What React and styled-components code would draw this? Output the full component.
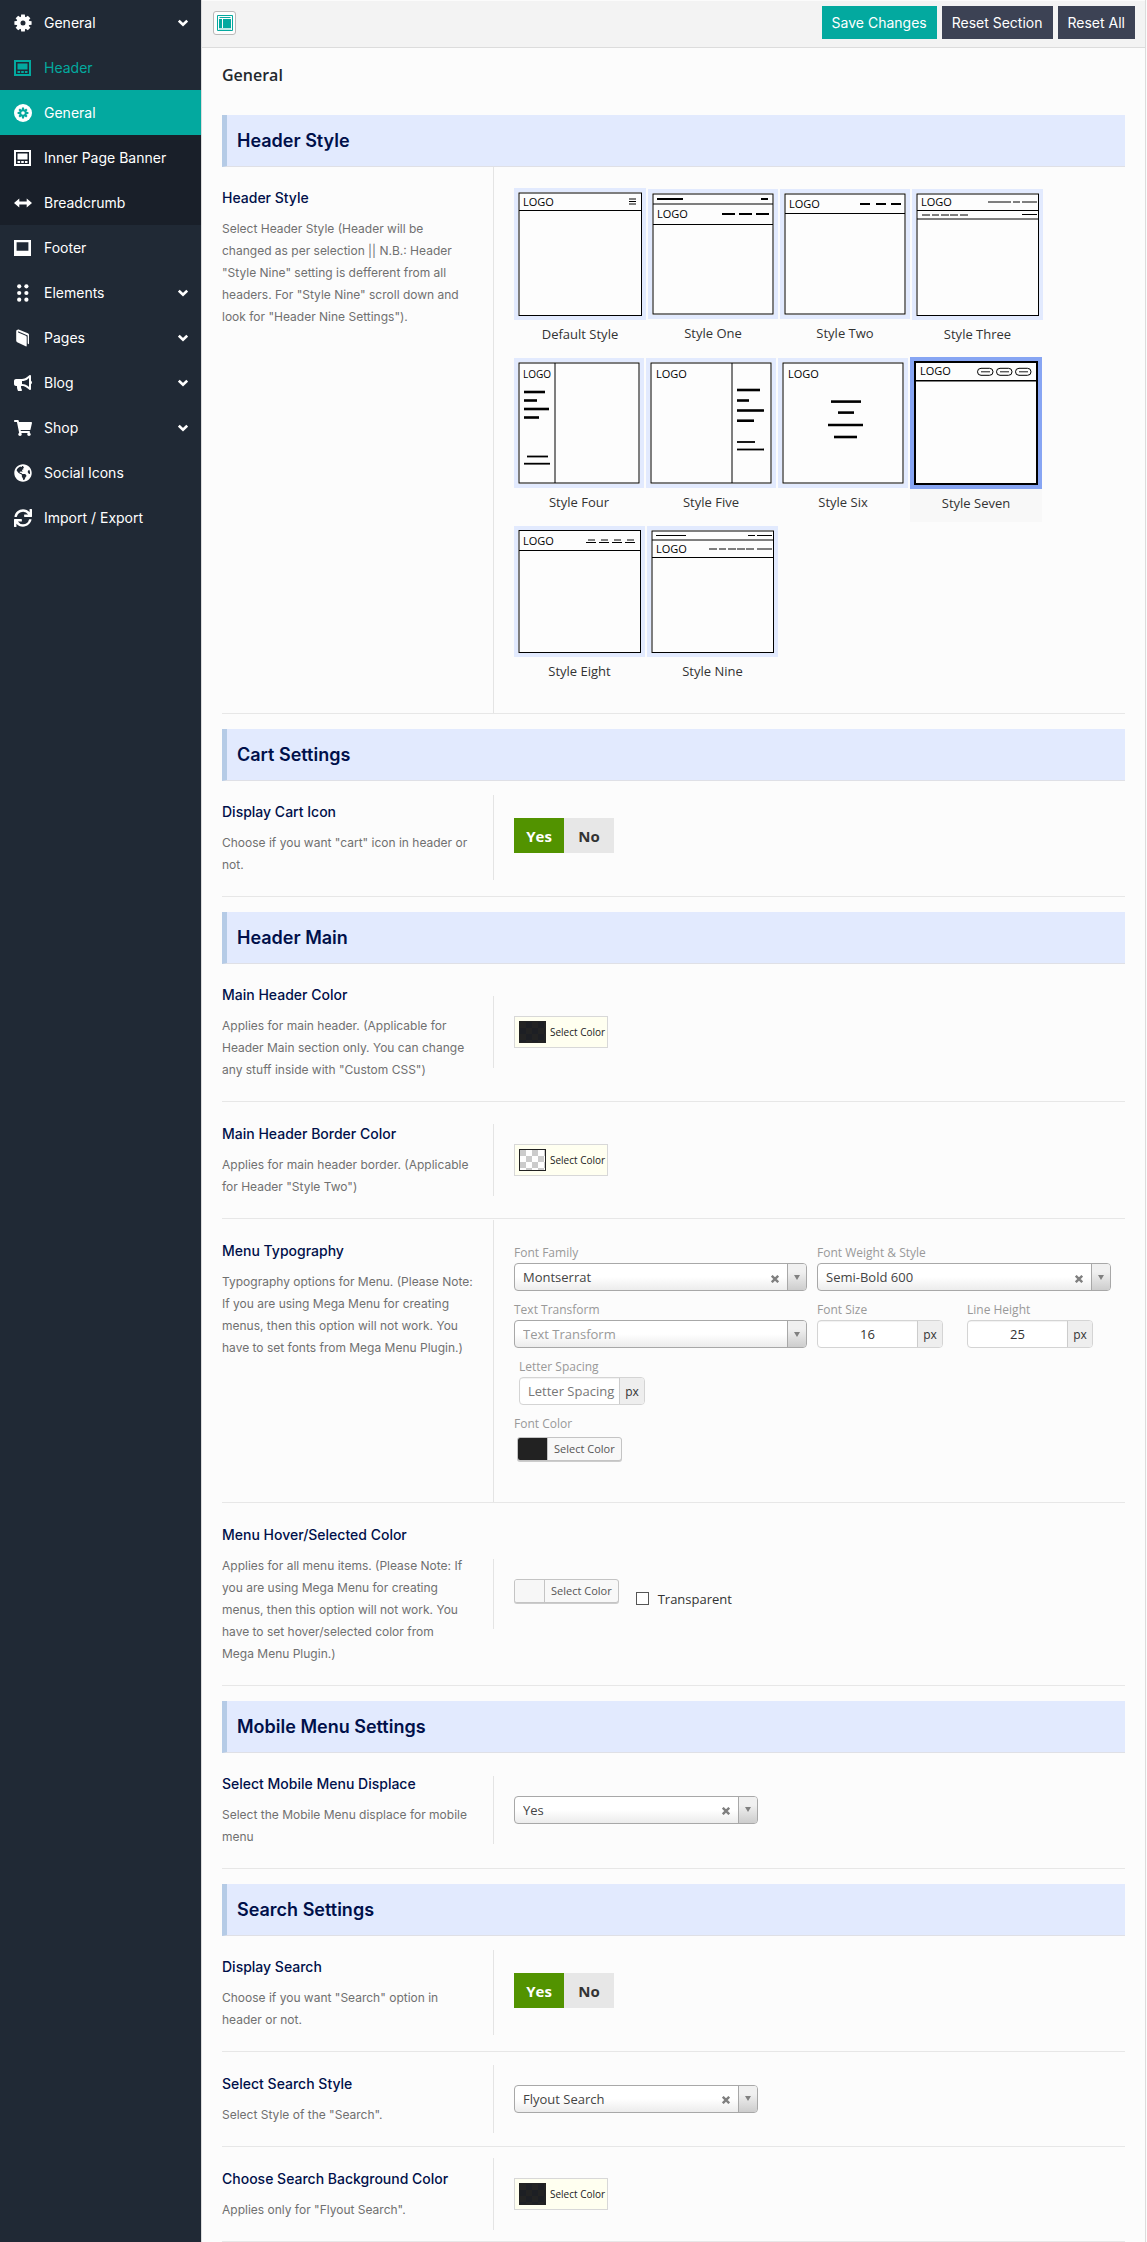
import React from "react";
import styled, { createGlobalStyle, css } from "styled-components";
import { FaBullhorn, FaGlobeAmericas, FaShoppingCart, FaSync } from "react-icons/fa";

const brand = "'Inter', 'Open Sans', sans-serif";
const system = "'Open Sans', 'Noto Sans', sans-serif";

const GlobalStyle = createGlobalStyle`
  *, *::before, *::after { box-sizing: border-box; }
  body { margin: 0; background: #fcfcfc; color: #333; font-family: ${system}; font-size: 13px; }
  h2, h3, h4, p, ul, fieldset { margin: 0; padding: 0; }
  fieldset { border: 0; min-width: 0; }
  button, input, select { font: inherit; color: inherit; margin: 0; }
`;

const hiddenInput = css`
  position: absolute;
  opacity: 0;
  width: 1px;
  height: 1px;
  margin: 0;
`;

/* ---------- shell ---------- */

const Page = styled.div`
  display: flex;
  min-height: 100vh;
  padding-right: 1px;
`;

const Sidebar = styled.nav`
  flex: 0 0 201px;
  background: #202935;
`;

const NavList = styled.ul`
  list-style: none;
`;

const NavLink = styled.a`
  display: flex;
  align-items: center;
  gap: 12px;
  height: 45px;
  padding: 0 13px 0 14px;
  font: 400 14px/20px ${brand};
  text-decoration: none;
  color: ${(p) => (p.$tone === "parent" ? "#03a99f" : "#fff")};
  background: ${(p) => (p.$tone === "active" ? "#03a99f" : p.$tone === "sub" ? "#191f29" : "transparent")};

  svg { flex: none; }
  span { flex: 1; }
`;

const Main = styled.main`
  flex: 1;
  min-width: 0;
  border: solid #dcdcdc;
  border-width: 0 1px;
`;

const TopBar = styled.header`
  display: flex;
  align-items: center;
  gap: 5px;
  padding: 5px 10px 8px 11px;
  border-top: 1px solid #fbfbfb;
  border-bottom: 1px solid #dcdcdc;
  background: #f3f3f3;
`;

const ExpandButton = styled.button`
  display: grid;
  place-items: center;
  width: 23px;
  height: 24px;
  margin-right: auto;
  padding: 0;
  border: 1px solid #b9b9b9;
  border-radius: 3px;
  background: #fdfdfd;
`;

const ActionButton = styled.button`
  height: 33px;
  padding: 0 10px;
  border: 0;
  background: ${(p) => (p.$primary ? "#03a99f" : "#3c4254")};
  color: #fff;
  font: 400 14px/20px ${brand};
`;

const Content = styled.div`
  padding: 0 20px 1px;
`;

const PageTitle = styled.h2`
  padding: 15px 0 28px;
  font: 600 16px/24px ${system};
  color: #23282d;
`;

const Section = styled.section`
  & + & { margin-top: 15px; }
`;

const Band = styled.h3`
  padding: 14px 10px 13px;
  border-left: 5px solid #b5cbe6;
  border-bottom: 1px solid #dfe0e6;
  background: #e2eafe;
  color: #00104a;
  font: 600 18px/24px ${brand};
`;

const Row = styled.div`
  display: grid;
  grid-template-columns: 271px minmax(0, 1fr);
  align-items: center;
  border-bottom: 1px solid #e7e7e7;

  & + & { padding-top: 1px; }
`;

const Info = styled.div`
  align-self: start;
  padding: 20px 4px 20px 0;
`;

const FieldTitle = styled.h4`
  margin-bottom: 9px;
  font: 500 14px/22px ${brand};
  color: #00104a;
`;

const Description = styled.p`
  font: 400 12px/22px ${brand};
  color: #707070;
  white-space: pre-line;
`;

const cellPadding = {
  toggle: "23px 0 27px 20px",
  control: "20px 0 20px 20px",
  tall: "21px 0 23px 20px",
};

const Cell = styled.div`
  align-self: ${(p) => (p.$kind === "tall" ? "stretch" : "center")};
  margin-bottom: ${(p) => (p.$kind === "tall" ? "0" : "2px")};
  padding: ${(p) => cellPadding[p.$kind]};
  border-left: 1px solid #e4e4e4;
`;

/* ---------- header style picker ---------- */

const Gallery = styled.fieldset`
  display: flex;
  flex-wrap: wrap;
  align-items: center;
  gap: 4px 2px;
`;

const StyleOption = styled.label`
  display: flex;
  flex-direction: column;
  font-size: 13px;
  line-height: 28px;
  text-align: center;
  padding-bottom: 5px;
  cursor: pointer;

  input { ${hiddenInput} }
  svg {
    display: block;
    border: 4px solid #e2eafe;
    background: #fdfdfd;
  }
  &:has(input:checked) { background: #f8f8f8; }
  input:checked + svg { border-color: #87a5f3; }
`;

/* ---------- toggles ---------- */

const Toggle = styled.fieldset`
  display: flex;

  label {
    width: 50px;
    height: 35px;
    font: 700 15px/36px ${system};
    text-align: center;
    color: #333;
    background: #e7e7e7;
    cursor: pointer;
  }
  input { ${hiddenInput} }
  label:has(input:checked) { background: #529300; color: #fff; }
`;

/* ---------- colour buttons ---------- */

const AlphaButton = styled.button`
  display: flex;
  align-items: center;
  gap: 4px;
  height: 32px;
  padding: 0 2px 0 4px;
  border: 1px solid #d8d8d8;
  background: #fffff0;
  color: #222;
  font-size: 10px;
  line-height: 20px;
  white-space: nowrap;
`;

const AlphaSwatch = styled.span`
  width: 27px;
  height: 22px;
  border: 1px solid #222;
  background: ${(p) =>
    p.$clear
      ? "repeating-conic-gradient(#fff 0 25%, #ccc 0 50%) 0 0 / 12px 12px"
      : "repeating-conic-gradient(#1d1f24 0 25%, #232323 0 50%) 0 0 / 12px 12px"};
`;

const PickerButton = styled.button`
  display: flex;
  height: 24px;
  padding: 0;
  border: 1px solid #c4c4c4;
  border-radius: 3px;
  background: #f8f8f8;
  box-shadow: 0 1px 0 #ccc;
  color: #555;
  font-size: 11px;
  line-height: 22px;
  overflow: hidden;
  white-space: nowrap;

  &::before {
    content: "";
    align-self: stretch;
    width: 30px;
    border-right: 1px solid #c4c4c4;
    background: ${(p) => p.$color};
  }
  span { padding: 0 6px; }
`;

const ColorLine = styled.div`
  display: flex;
  align-items: flex-start;
  gap: 17px;
`;

const CheckLabel = styled.label`
  display: flex;
  align-items: center;
  gap: 9px;
  padding-top: 10px;
  line-height: 20px;
`;

const Checkbox = styled.input.attrs({ type: "checkbox" })`
  appearance: none;
  width: 13px;
  height: 13px;
  border: 1px solid #555;
  background: #fff;
`;

/* ---------- selects and inputs ---------- */

const SelectBox = styled.div`
  display: flex;
  height: 28px;
  max-width: ${(p) => (p.$narrow ? "244px" : "none")};
  border: 1px solid #a8a8a8;
  border-radius: 4px;
  background: linear-gradient(#fff 50%, #ececec);
  overflow: hidden;

  select {
    flex: 1;
    min-width: 0;
    padding: 0 8px;
    border: 0;
    appearance: none;
    background: transparent;
    color: ${(p) => (p.$empty ? "#999" : "#444")};
  }
`;

const ClearButton = styled.button`
  display: grid;
  place-items: center;
  width: 24px;
  padding: 3px 0 0;
  border: 0;
  background: transparent;
  color: #808080;
`;

const Arrow = styled.span`
  display: grid;
  place-items: center;
  width: 19px;
  border-left: 1px solid #a8a8a8;
  background: linear-gradient(#f0f0f0 30%, #cdcdcd);
  color: #808080;
`;

const smallLabel = css`
  display: block;
  font-size: 12px;
  line-height: 20px;
  color: #999;
`;

const FieldLabel = styled.label`
  ${smallLabel}
`;

const GroupLabel = styled.div`
  ${smallLabel}
`;

const TypeGrid = styled.div`
  display: grid;
  grid-template-columns: 293px 294px;
  gap: 9px 10px;
  padding-top: 2px;
`;

const TypeBottom = styled.div`
  display: grid;
  gap: 9px;
  padding: 9px 0 18px;
`;

const UnitFields = styled.div`
  display: flex;
  gap: 24px;
  padding-left: ${(p) => (p.$indent ? "5px" : "0")};
`;

const UnitInput = styled.div`
  display: flex;
  width: 126px;
  height: 28px;
  border: 1px solid #d4d4d4;
  border-radius: 4px;
  background: #fff;
  overflow: hidden;

  input {
    flex: 1;
    min-width: 0;
    padding: ${(p) => (p.$left ? "0 0 0 8px" : "0 8px")};
    border: 0;
    background: transparent;
    box-shadow: inset 0 1px 1px rgba(0, 0, 0, 0.06);
    color: #333;
    text-align: ${(p) => (p.$left ? "left" : "center")};
  }
  input::placeholder { color: #777; opacity: 1; }
  span {
    width: 25px;
    border-left: 1px solid #ccc;
    background: #eee;
    font-size: 12px;
    line-height: 27px;
    text-align: center;
  }
`;

const ColorSlot = styled.div`
  padding: 3px 3px 0;
`;

/* ---------- icons ---------- */

const Icon = ({ children }) => (
  <svg width="18" height="18" viewBox="0 0 18 18" fill="currentColor" aria-hidden="true">
    {children}
  </svg>
);

const teeth = [0, 45, 90, 135, 180, 225, 270, 315];

const Gear = () => (
  <Icon>
    {teeth.map((a) => (
      <path key={a} d="M7.2 0.4h3.6l0.5 4h-4.6z" transform={`rotate(${a} 9 9)`} />
    ))}
    <circle cx="9" cy="9" r="4.5" fill="none" stroke="currentColor" strokeWidth="4" />
  </Icon>
);

const GearBadge = () => (
  <Icon>
    <circle cx="9" cy="9" r="9" />
    <g fill="#03a99f">
      {teeth.map((a) => (
        <path key={a} d="M8 3.6h2l0.3 2.4h-2.6z" transform={`rotate(${a} 9 9)`} />
      ))}
    </g>
    <circle cx="9" cy="9" r="2.7" fill="none" stroke="#03a99f" strokeWidth="1.8" />
  </Icon>
);

const LayoutIcon = () => (
  <Icon>
    <path fillRule="evenodd" d="M0 1h17v16H0z M2 3v12h13V3z" />
    <path d="M3.5 4.5h10v6h-10z M3.5 12h2.6v2H3.5z M7.2 12h2.6v2H7.2z M10.9 12h2.6v2h-2.6z" />
  </Icon>
);

const ArrowsH = () => (
  <Icon>
    <path d="M0 9l5.3-4.6v3.1h7.4V4.4L18 9l-5.3 4.6v-3.1H5.3v3.1z" />
  </Icon>
);

const FooterIcon = () => (
  <Icon>
    <path fillRule="evenodd" d="M0 1h17v16H0z M2.6 3.2v8.6h11.8V3.2z" />
  </Icon>
);

const Dots = () => (
  <Icon>
    {[2.3, 9, 15.7].map((y) => (
      <g key={y}>
        <circle cx="5.2" cy={y} r="2.1" />
        <circle cx="12.4" cy={y} r="2.1" />
      </g>
    ))}
  </Icon>
);

const Book = () => (
  <Icon>
    <path d="M2.2 2.4C2.2 1 4 .2 5.2.7l8.6 3.5c.7.3 1.2.9 1.2 1.6v9.4l-1.3-.7V6.4L4.6 2.6c-.7-.3-1 .5-.4.8l7.6 3.3c.6.3.9.7.9 1.4v8.6c0 .8-.4 1-1 .6L3.2 13.2c-.7-.4-1-.9-1-1.6z" />
  </Icon>
);

const Chevron = () => (
  <svg width="10" height="8" viewBox="0 0 10 8" fill="none" stroke="currentColor" strokeWidth="2.6" aria-hidden="true">
    <path d="M0.8 1.6L5 5.6l4.2-4" />
  </svg>
);

const Cross = () => (
  <svg width="8" height="8" viewBox="0 0 8 8" stroke="currentColor" strokeWidth="2.4" aria-hidden="true">
    <path d="M0.8 0.8l6.4 6.4M7.2 0.8L0.8 7.2" />
  </svg>
);

const Triangle = () => (
  <svg width="6" height="5" viewBox="0 0 6 5" fill="currentColor" aria-hidden="true">
    <path d="M0 0h6L3 5z" />
  </svg>
);

const ExpandIcon = () => (
  <svg width="16" height="16" viewBox="0 0 16 16" aria-hidden="true">
    <path fill="none" stroke="#03a99f" d="M0.5 0.5h15v15h-15z M2.5 2.5h11" />
    <path fill="#03a99f" d="M2 4h3v9H2z M6 4h8v9H6z" />
    <path stroke="#03a99f" strokeOpacity="0.5" d="M2 14h12" />
  </svg>
);

/* ---------- header style drawings ---------- */

// frame: [x1, y1, x2, y2]; logo: [x, baseline]; lines: [x1, x2, y, thickness].
const headerStyles = [
  {
    name: "Default Style", size: 132, frame: [1, 1, 123.5, 123.5], logo: [5, 13.5], rules: [18.5],
    lines: [[111, 118, 7, 1], [111, 118, 9.5, 1], [111, 118, 12, 1]],
  },
  {
    name: "Style One", size: 130, frame: [1, 1, 121, 121], logo: [5, 25], rules: [11, 31.5],
    lines: [[5, 31, 6, 2], [109, 116, 6, 2], [70, 83, 21, 2], [87, 100, 21, 2], [104, 117, 21, 2]],
  },
  {
    name: "Style Two", size: 130, frame: [1, 1, 121, 121], logo: [5, 15], rules: [20.5],
    lines: [[76, 86, 11, 2], [92, 102, 11, 2], [107, 117, 11, 2]],
  },
  {
    name: "Style Three", size: 131, frame: [1, 1, 122.5, 122.5], logo: [5, 12.5], rules: [17.5, 26],
    lines: [
      [72, 95, 9, 1], [97, 104, 9, 1], [106, 121, 9, 1],
      [6, 14, 22, 1], [16, 23, 22, 1], [25, 33, 22, 1], [34, 42, 22, 1], [44, 52, 22, 1], [106, 121, 21.5, 1],
    ],
  },
  {
    name: "Style Four", size: 130, frame: [1, 1, 121, 121], logo: [5, 16], logoSize: 10, rules: [], column: 37,
    lines: [[6, 27, 30, 2.6], [6, 19, 38.5, 2.6], [6, 31, 47, 2.6], [6, 21, 55.5, 2.6], [9, 30, 94.5, 1.8], [6, 32, 101.7, 1.8]],
  },
  {
    name: "Style Five", size: 130, frame: [1, 1, 121, 121], logo: [6, 16], rules: [], column: 82,
    lines: [[87, 110, 28, 2.6], [87, 99, 38.5, 2.6], [87, 114, 48.5, 2.6], [87, 104, 58.7, 2.6], [87, 105, 80, 1.8], [87, 114, 87.5, 1.8]],
  },
  {
    name: "Style Six", size: 130, frame: [1, 1, 121, 121], logo: [6, 16], rules: [],
    lines: [[49, 79, 39.6, 2.6], [56, 72, 50.6, 2.6], [46, 81, 63, 2.6], [52, 75, 75, 2.6]],
  },
  {
    name: "Style Seven", size: 132, frame: [1, 1, 123, 123], heavy: true, logo: [6, 14], rules: [19.7],
    lines: [[67, 76, 10.8, 0.9], [86, 95, 10.8, 0.9], [105, 114, 10.8, 0.9]], pills: [63.5, 82.5, 101.5],
  },
  {
    name: "Style Eight", size: 131, frame: [1, 0.5, 122.5, 122.5], logo: [5, 14.5], rules: [20.5],
    lines: [
      [70, 77, 10, 1], [83, 90, 10, 1], [96, 103, 10, 1], [109, 116, 10, 1],
      [68, 78, 12.5, 1], [81, 91, 12.5, 1], [94, 104, 12.5, 1], [107, 117, 12.5, 1],
    ],
  },
  {
    name: "Style Nine", size: 131, frame: [1, 1, 122.5, 122.5], logo: [5, 23], rules: [10, 27.5],
    lines: [
      [5, 35, 5.5, 1], [97, 104, 5.5, 1], [106, 121, 5.5, 1],
      [58, 66, 19, 1], [68, 75, 19, 1], [77, 85, 19, 1], [86, 94, 19, 1], [95, 103, 19, 1], [106, 121, 19, 1],
    ],
  },
];

function HeaderDrawing({ size, frame, heavy, logo, logoSize = 11, rules, column, lines, pills = [] }) {
  const [x1, y1, x2, y2] = frame;
  const inner = size - 8;
  return (
    <svg width={size} height={size} viewBox={`0 0 ${inner} ${inner}`} fill="none" stroke="#000" aria-hidden="true">
      <rect x={x1} y={y1} width={x2 - x1} height={y2 - y1} strokeWidth={heavy ? 2 : 1} />
      {rules.map((y) => (
        <path key={y} d={`M${x1} ${y}H${x2}`} strokeWidth={heavy ? 1.5 : 1} />
      ))}
      {column && <path d={`M${column} ${y1}V${y2}`} />}
      {lines.map(([a, b, y, w], i) => (
        <path key={i} d={`M${a} ${y}H${b}`} strokeWidth={w} />
      ))}
      {pills.map((x) => (
        <rect key={x} x={x} y="7.3" width="15.5" height="7" rx="3.5" />
      ))}
      <text x={logo[0]} y={logo[1]} fontSize={logoSize} fontFamily="Open Sans, sans-serif" fill="#000" stroke="none">
        LOGO
      </text>
    </svg>
  );
}

/* ---------- composed controls ---------- */

function Select({ id, value, options = [value], clearable = true, empty, narrow, label }) {
  return (
    <SelectBox $narrow={narrow} $empty={empty}>
      <select id={id} defaultValue={value} aria-label={label}>
        {options.map((o) => (
          <option key={o}>{o}</option>
        ))}
      </select>
      {clearable && (
        <ClearButton type="button" aria-label="Clear">
          <Cross />
        </ClearButton>
      )}
      <Arrow>
        <Triangle />
      </Arrow>
    </SelectBox>
  );
}

function LabeledSelect({ id, label, ...rest }) {
  return (
    <div>
      <FieldLabel htmlFor={id}>{label}</FieldLabel>
      <Select id={id} {...rest} />
    </div>
  );
}

function UnitField({ id, label, value, placeholder }) {
  return (
    <div>
      <FieldLabel htmlFor={id}>{label}</FieldLabel>
      <UnitInput $left={!value}>
        <input id={id} type="text" defaultValue={value} placeholder={placeholder} />
        <span>px</span>
      </UnitInput>
    </div>
  );
}

function YesNo({ name, label }) {
  return (
    <Toggle aria-label={label}>
      <label>
        <input type="radio" name={name} defaultChecked />
        Yes
      </label>
      <label>
        <input type="radio" name={name} />
        No
      </label>
    </Toggle>
  );
}

const AlphaColor = ({ clear }) => (
  <AlphaButton type="button">
    <AlphaSwatch $clear={clear} />
    Select Color
  </AlphaButton>
);

function Setting({ title, text, kind = "control", children }) {
  return (
    <Row>
      <Info>
        <FieldTitle>{title}</FieldTitle>
        <Description>{text}</Description>
      </Info>
      <Cell $kind={kind}>{children}</Cell>
    </Row>
  );
}

const navItems = [
  { label: "General", icon: <Gear />, more: true },
  { label: "Header", icon: <LayoutIcon />, tone: "parent" },
  { label: "General", icon: <GearBadge />, tone: "active" },
  { label: "Inner Page Banner", icon: <LayoutIcon />, tone: "sub" },
  { label: "Breadcrumb", icon: <ArrowsH />, tone: "sub" },
  { label: "Footer", icon: <FooterIcon /> },
  { label: "Elements", icon: <Dots />, more: true },
  { label: "Pages", icon: <Book />, more: true },
  { label: "Blog", icon: <FaBullhorn size={18} />, more: true },
  { label: "Shop", icon: <FaShoppingCart size={18} />, more: true },
  { label: "Social Icons", icon: <FaGlobeAmericas size={18} /> },
  { label: "Import / Export", icon: <FaSync size={18} /> },
];

export default function App() {
  return (
    <>
      <GlobalStyle />
      <Page>
        <Sidebar>
          <NavList>
            {navItems.map((item, i) => (
              <li key={i}>
                <NavLink href="#" $tone={item.tone}>
                  {item.icon}
                  <span>{item.label}</span>
                  {item.more && <Chevron />}
                </NavLink>
              </li>
            ))}
          </NavList>
        </Sidebar>

        <Main>
          <TopBar>
            <ExpandButton type="button" aria-label="Expand options">
              <ExpandIcon />
            </ExpandButton>
            <ActionButton type="button" $primary>Save Changes</ActionButton>
            <ActionButton type="button">Reset Section</ActionButton>
            <ActionButton type="button">Reset All</ActionButton>
          </TopBar>

          <Content>
            <PageTitle>General</PageTitle>

            <Section>
              <Band>Header Style</Band>
              <Setting
                title="Header Style"
                text={
                  'Select Header Style (Header will be\nchanged as per selection || N.B.: Header\n"Style Nine" setting is defferent from all\nheaders. For "Style Nine" scroll down and\nlook for "Header Nine Settings").'
                }
                kind="tall"
              >
                <Gallery aria-label="Header Style">
                  {headerStyles.map((s) => (
                    <StyleOption key={s.name}>
                      <input type="radio" name="header-style" defaultChecked={s.name === "Style Seven"} />
                      <HeaderDrawing {...s} />
                      {s.name}
                    </StyleOption>
                  ))}
                </Gallery>
              </Setting>
            </Section>

            <Section>
              <Band>Cart Settings</Band>
              <Setting title="Display Cart Icon" text={'Choose if you want "cart" icon in header or\nnot.'} kind="toggle">
                <YesNo name="cart" label="Display Cart Icon" />
              </Setting>
            </Section>

            <Section>
              <Band>Header Main</Band>
              <Setting
                title="Main Header Color"
                text={
                  'Applies for main header. (Applicable for\nHeader Main section only. You can change\nany stuff inside with "Custom CSS")'
                }
              >
                <AlphaColor />
              </Setting>
              <Setting
                title="Main Header Border Color"
                text={'Applies for main header border. (Applicable\nfor Header "Style Two")'}
              >
                <AlphaColor clear />
              </Setting>
              <Setting
                title="Menu Typography"
                text={
                  "Typography options for Menu. (Please Note:\nIf you are using Mega Menu for creating\nmenus, then this option will not work. You\nhave to set fonts from Mega Menu Plugin.)"
                }
                kind="tall"
              >
                <TypeGrid>
                  <LabeledSelect id="family" label="Font Family" value="Montserrat" />
                  <LabeledSelect id="weight" label="Font Weight &amp; Style" value="Semi-Bold 600" />
                  <LabeledSelect id="transform" label="Text Transform" value="Text Transform" clearable={false} empty />
                  <UnitFields>
                    <UnitField id="size" label="Font Size" value="16" />
                    <UnitField id="line" label="Line Height" value="25" />
                  </UnitFields>
                </TypeGrid>
                <TypeBottom>
                  <UnitFields $indent>
                    <UnitField id="spacing" label="Letter Spacing" placeholder="Letter Spacing" />
                  </UnitFields>
                  <div>
                    <GroupLabel>Font Color</GroupLabel>
                    <ColorSlot>
                      <PickerButton type="button" $color="#222">
                        <span>Select Color</span>
                      </PickerButton>
                    </ColorSlot>
                  </div>
                </TypeBottom>
              </Setting>
              <Setting
                title="Menu Hover/Selected Color"
                text={
                  "Applies for all menu items. (Please Note: If\nyou are using Mega Menu for creating\nmenus, then this option will not work. You\nhave to set hover/selected color from\nMega Menu Plugin.)"
                }
              >
                <ColorLine>
                  <PickerButton type="button" $color="#f7f7f7">
                    <span>Select Color</span>
                  </PickerButton>
                  <CheckLabel>
                    <Checkbox />
                    Transparent
                  </CheckLabel>
                </ColorLine>
              </Setting>
            </Section>

            <Section>
              <Band>Mobile Menu Settings</Band>
              <Setting title="Select Mobile Menu Displace" text={"Select the Mobile Menu displace for mobile\nmenu"}>
                <Select value="Yes" options={["Yes", "No"]} narrow label="Select Mobile Menu Displace" />
              </Setting>
            </Section>

            <Section>
              <Band>Search Settings</Band>
              <Setting
                title="Display Search"
                text={'Choose if you want "Search" option in\nheader or not.'}
                kind="toggle"
              >
                <YesNo name="search" label="Display Search" />
              </Setting>
              <Setting title="Select Search Style" text={'Select Style of the "Search".'}>
                <Select value="Flyout Search" narrow label="Select Search Style" />
              </Setting>
              <Setting title="Choose Search Background Color" text={'Applies only for "Flyout Search".'}>
                <AlphaColor />
              </Setting>
            </Section>
          </Content>
        </Main>
      </Page>
    </>
  );
}
